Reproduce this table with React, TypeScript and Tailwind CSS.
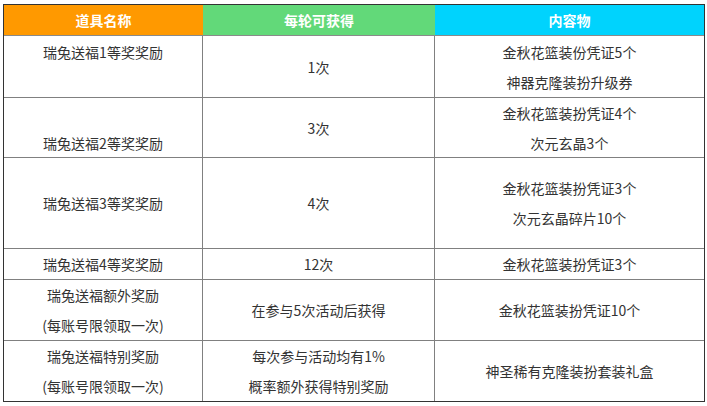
import React from "react";

type Row = { h: string; c1: string[]; c2: string[]; c3: string[] };

const rows: Row[] = [
  { h: "h-[62px]", c1: ["瑞兔送福1等奖奖励", ""], c2: ["1次"], c3: ["金秋花篮装份凭证5个", "神器克隆装扮升级券"] },
  { h: "h-[60px]", c1: ["", "瑞兔送福2等奖奖励"], c2: ["3次"], c3: ["金秋花篮装扮凭证4个", "次元玄晶3个"] },
  { h: "h-[91px]", c1: ["瑞兔送福3等奖奖励"], c2: ["4次"], c3: ["金秋花篮装扮凭证3个", "次元玄晶碎片10个"] },
  { h: "h-[31px]", c1: ["瑞兔送福4等奖奖励"], c2: ["12次"], c3: ["金秋花篮装扮凭证3个"] },
  { h: "h-[61px]", c1: ["瑞兔送福额外奖励", "(每账号限领取一次)"], c2: ["在参与5次活动后获得"], c3: ["金秋花篮装扮凭证10个"] },
  { h: "h-[60px]", c1: ["瑞兔送福特别奖励", "(每账号限领取一次)"], c2: ["每次参与活动均有1%", "概率额外获得特别奖励"], c3: ["神圣稀有克隆装扮套装礼盒"] },
];

function Lines({ lines }: { lines: string[] }) {
  return (
    <>
      {lines.map((l, i) => (
        <div key={i} className="h-[30px] leading-[30px] whitespace-nowrap">
          {l || "\u00a0"}
        </div>
      ))}
    </>
  );
}

export default function App() {
  return (
    <div
      className="w-[707px] h-[406px] bg-white pt-[4px] pl-[3px] text-[14px] text-[#333]"
      style={{ fontFamily: '"Noto Sans CJK SC", "Microsoft YaHei", sans-serif' }}
    >
      <div className="w-[702px] border border-[#333] flex flex-col">
        <div className="flex h-[31px] border-b border-[#8a8a8a] text-white font-bold">
          <div className="w-[199px] bg-[#ff9900] flex items-center justify-center">道具名称</div>
          <div className="w-[232px] bg-[#62d979] flex items-center justify-center">每轮可获得</div>
          <div className="w-[269px] bg-[#00d3fd] flex items-center justify-center">内容物</div>
        </div>
        {rows.map((r, i) => (
          <div
            key={i}
            className={`flex ${r.h} ${i < rows.length - 1 ? "border-b border-[#808080]" : ""}`}
          >
            <div className="w-[199px] border-r border-[#808080] flex flex-col justify-center items-center text-center">
              <Lines lines={r.c1} />
            </div>
            <div className="w-[232px] border-r border-[#808080] flex flex-col justify-center items-center text-center">
              <Lines lines={r.c2} />
            </div>
            <div className="w-[269px] flex flex-col justify-center items-center text-center">
              <Lines lines={r.c3} />
            </div>
          </div>
        ))}
      </div>
    </div>
  );
}
